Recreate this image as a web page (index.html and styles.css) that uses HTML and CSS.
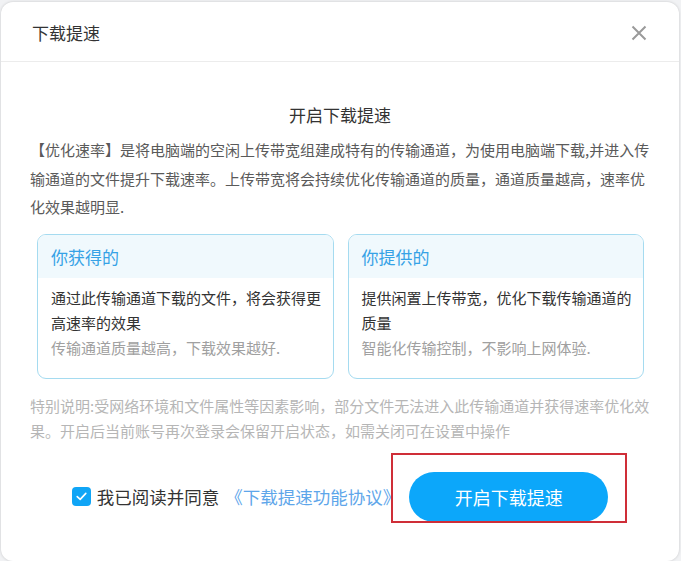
FILE: index.html
```html
<!DOCTYPE html>
<html lang="zh-CN">
<head>
<meta charset="utf-8">
<title>下载提速</title>
<link rel="stylesheet" href="styles.css">
</head>
<body>
<div class="dialog">
  <div class="dialog-header">
    <span class="dialog-title">下载提速</span>
    <button class="close" aria-label="关闭">
      <svg width="16" height="16" viewBox="0 0 16 16"><path d="M1.5 1.5L14.5 14.5M14.5 1.5L1.5 14.5" stroke="#9a9a9a" stroke-width="2" fill="none"/></svg>
    </button>
  </div>
  <div class="dialog-body">
    <h2 class="heading">开启下载提速</h2>
    <p class="intro">【优化速率】是将电脑端的空闲上传带宽组建成特有的传输通道，为使用电脑端下载,并进入传输通道的文件提升下载速率。上传带宽将会持续优化传输通道的质量，通道质量越高，速率优化效果越明显.</p>
    <div class="cards">
      <div class="card">
        <div class="card-head">你获得的</div>
        <div class="card-body">
          <p class="card-main">通过此传输通道下载的文件，将会获得更高速率的效果</p>
          <p class="card-sub">传输通道质量越高，下载效果越好.</p>
        </div>
      </div>
      <div class="card">
        <div class="card-head">你提供的</div>
        <div class="card-body">
          <p class="card-main">提供闲置上传带宽，优化下载传输通道的质量</p>
          <p class="card-sub">智能化传输控制，不影响上网体验.</p>
        </div>
      </div>
    </div>
    <p class="note">特别说明:受网络环境和文件属性等因素影响，部分文件无法进入此传输通道并获得速率优化效果。开启后当前账号再次登录会保留开启状态，如需关闭可在设置中操作</p>
    <div class="footer">
      <label class="agree">
        <span class="checkbox">
          <svg width="11" height="9" viewBox="0 0 11 9"><path d="M1.2 4.6L4.2 7.4L9.8 1.4" stroke="#fff" stroke-width="1.6" fill="none" stroke-linecap="round" stroke-linejoin="round"/></svg>
        </span>
        <span class="agree-text">我已阅读并同意</span>
        <a class="agree-link">《下载提速功能协议》</a>
      </label>
      <button class="primary">开启下载提速</button>
    </div>
  </div>
  <div class="highlight"></div>
</div>
</body>
</html>
```
FILE: styles.css
```css
html, body {
  margin: 0;
  padding: 0;
}
body {
  background: #f1f2f4;
  font-family: "Noto Sans CJK SC", "Noto Sans", sans-serif;
  overflow: hidden;
}
.dialog {
  position: relative;
  box-sizing: border-box;
  margin: 2px 2px 0 1px;
  width: 678px;
  height: 559px;
  background: #fff;
  border-radius: 12px;
  box-shadow: 0 0 3px rgba(0, 0, 0, 0.18);
}
.dialog-header {
  border-bottom: 1px solid #ececec;
  display: flex;
  align-items: center;
  justify-content: space-between;
  padding: 2px 31px 0 31px;
  box-sizing: border-box;
  height: 60px;
}
.dialog-title {
  font-size: 17px;
  color: #333;
  line-height: 24px;
}
.close {
  border: 0;
  background: none;
  padding: 0;
  width: 16px;
  height: 16px;
  display: flex;
  margin-right: 1px;
}
.dialog-body {
  padding: 41px 29px 0 29px;
}
.heading {
  margin: 0;
  font-size: 17px;
  font-weight: 400;
  line-height: 24px;
  color: #333;
  text-align: center;
}
.intro {
  margin: 9px 0 0;
  font-size: 15px;
  line-height: 28.5px;
  color: #5a5a5a;
}
.cards {
  display: flex;
  gap: 14px;
  margin: 12px 6px 0 7px;
}
.card {
  flex: 1;
  border: 1px solid #a5dbf0;
  border-radius: 9px;
  overflow: hidden;
}
.card-head {
  height: 43px;
  background: #f0f9fd;
  padding: 0 13px;
  font-size: 17px;
  line-height: 43px;
  color: #36a2e6;
}
.card-body {
  padding: 7px 10px 18px 13px;
}
.card-main {
  margin: 0;
  font-size: 15px;
  line-height: 25px;
  color: #333;
}
.card-sub {
  margin: 0;
  font-size: 15px;
  line-height: 25px;
  color: #a0a0a0;
}
.note {
  margin: 14px 0 0;
  font-size: 15px;
  line-height: 25px;
  color: #b6b6b6;
}
.footer {
  margin-top: 29px;
  display: flex;
  align-items: center;
  justify-content: center;
  gap: 9px;
}
.agree {
  display: flex;
  align-items: center;
  font-size: 17.5px;
  line-height: 24px;
}
.checkbox {
  width: 19px;
  height: 19px;
  border-radius: 4px;
  background: #10a5f6;
  display: flex;
  align-items: center;
  justify-content: center;
  margin-right: 6px;
}
.agree-text {
  color: #333;
}
.agree-link {
  color: #5ea6ea;
  margin-left: 6px;
}
.primary {
  width: 199px;
  height: 50px;
  border: 0;
  border-radius: 25px;
  background: #0ca7fa;
  color: #fff;
  font-family: inherit;
  font-size: 18px;
}
.highlight {
  position: absolute;
  left: 390px;
  top: 451px;
  width: 232px;
  height: 66px;
  border: 2px solid #cf2e38;
  pointer-events: none;
}
```
